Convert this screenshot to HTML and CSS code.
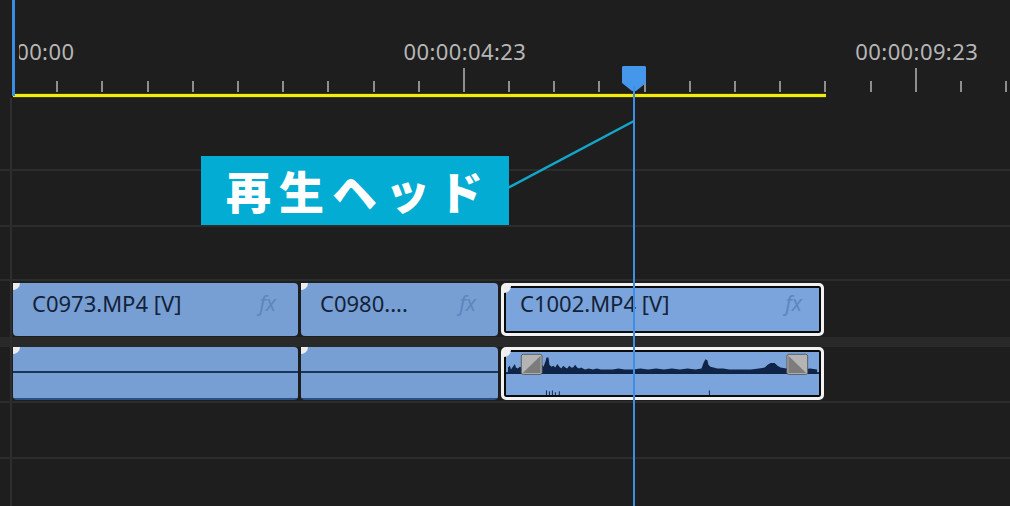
FILE: index.html
```html
<!DOCTYPE html>
<html lang="ja">
<head>
    <meta charset="UTF-8">
    <meta name="viewport" content="width=device-width, initial-scale=1.0">
    <title>タイムライン</title>
    <link rel="stylesheet" href="styles.css">
</head>
<body>
    <div class="timeline">
        <div class="ruler">
            <div class="scale-wrap">
                <div class="scale">
                    <div class="tick major"><span class="time">00:00:00:00</span></div>
                    <div class="tick"></div>
                    <div class="tick"></div>
                    <div class="tick"></div>
                    <div class="tick"></div>
                    <div class="tick"></div>
                    <div class="tick"></div>
                    <div class="tick"></div>
                    <div class="tick"></div>
                    <div class="tick"></div>
                    <div class="tick major"><span class="time">00:00:04:23</span></div>
                    <div class="tick"></div>
                    <div class="tick"></div>
                    <div class="tick"></div>
                    <div class="tick"></div>
                    <div class="tick"></div>
                    <div class="tick"></div>
                    <div class="tick"></div>
                    <div class="tick"></div>
                    <div class="tick"></div>
                    <div class="tick major"><span class="time">00:00:09:23</span></div>
                    <div class="tick"></div>
                    <div class="tick"></div>
                </div>
            </div>
            <div class="workarea"></div>
        </div>

        <div class="tracks">
            <div class="track t-first"><div class="gutter"></div><div class="lane"></div></div>
            <div class="track"><div class="gutter"></div><div class="lane"></div></div>
            <div class="track t-short"><div class="gutter"></div><div class="lane"></div></div>

            <div class="track video">
                <div class="gutter"></div>
                <div class="lane">
                    <div class="clip" style="width:285px"><span class="name">C0973.MP4 [V]</span><span class="fx">fx</span></div>
                    <div class="clip" style="width:197px"><span class="name">C0980....</span><span class="fx">fx</span></div>
                    <div class="clip selected" style="width:323px"><span class="name">C1002.MP4 [V]</span><span class="fx">fx</span></div>
                </div>
            </div>
            <div class="band"><div class="gutter"></div></div>
            <div class="track audio">
                <div class="gutter"></div>
                <div class="lane">
                    <div class="clip" style="width:285px"></div>
                    <div class="clip" style="width:197px"></div>
                    <div class="clip selected" style="width:323px">
                        <svg class="wave" viewBox="0 0 317 47" preserveAspectRatio="none">
                            <path fill="#0f2447" d="M2,24 L2,17 L4,15 L5,19 L7,16 L9,13 L10,17 L12,18 L14,16 L16,17 L18,14 L20,16 L22,15 L24,12 L26,16 L28,15 L30,17 L32,14 L34,16 L36,13 L38,16 L40,10 L41,6 L43,6 L44,14 L46,16 L48,15 L50,17 L52,13 L54,16 L56,18 L58,15 L60,17 L62,18 L64,15 L66,17 L68,17 L70,14 L72,17 L74,18 L76,17 L78,18 L80,19 L84,18 L88,19 L92,18 L96,19 L102,19 L108,19 L114,18 L120,19 L128,19 L136,18 L144,19 L152,18 L160,19 L168,18 L176,19 L184,18 L192,19 L198,18 L200,12 L202,8 L204,9 L205,14 L207,16 L210,17 L214,18 L220,18 L226,19 L232,19 L240,19 L248,19 L256,18 L262,17 L265,14 L268,12 L272,12 L275,15 L278,17 L284,18 L292,18 L300,19 L308,18 L315,19 L315,24 Z"/>
                            <rect x="0" y="22" width="317" height="2" fill="#0f2447"/>
                            <path stroke="#0f2447" stroke-width="1" d="M41,42 V47 M44,43 V47 M47,42 V47 M50,44 V47 M54,43 V47 M206,42 V47"/>
                            <rect x="15.5" y="2.5" width="21" height="22" rx="2" fill="#b4b4b4" stroke="#5a5a5a"/>
                            <polygon points="35,4 35,23 17,23" fill="#7c7c7c"/>
                            <rect x="284.5" y="2.5" width="21" height="22" rx="2" fill="#b4b4b4" stroke="#5a5a5a"/>
                            <polygon points="286,4 286,23 304,23" fill="#7c7c7c"/>
                        </svg>
                    </div>
                </div>
            </div>
            <div class="track"><div class="gutter"></div><div class="lane"></div></div>
            <div class="track t-last"><div class="gutter"></div><div class="lane"></div></div>
        </div>

        <!-- overlays -->
        <div class="inpoint"></div>
        <svg class="connector" width="1010" height="506">
            <line x1="508" y1="188" x2="634" y2="121" stroke="#12a6cb" stroke-width="2.5"/>
        </svg>
        <div class="callout">再生ヘッド</div>
        <div class="playhead">
            <svg class="head" width="24" height="26" viewBox="0 0 24 26">
                <polygon points="0,1 1,0 23,0 24,1 24,17 14,25 10,25 0,17" fill="#4597ec"/>
            </svg>
            <div class="playline"></div>
        </div>
    </div>
</body>
</html>
```

FILE: styles.css
```css
* {
    margin: 0;
    padding: 0;
    box-sizing: border-box;
}
body {
    background: #1e1e1e;
    font-family: "Noto Sans", "Liberation Sans", sans-serif;
    overflow: hidden;
}
.timeline {
    position: relative;
    width: 1010px;
    height: 506px;
    overflow: hidden;
}

/* ruler */
.ruler {
    height: 98px;
    display: flex;
    flex-direction: column;
}
.scale-wrap {
    height: 93px;
    margin-left: 19px;
    overflow: hidden;
}
.scale {
    display: flex;
    align-items: flex-end;
    height: 100%;
    margin-left: -8px;
    padding-bottom: 1px;
}
.tick {
    flex: none;
    width: 45.2px;
    height: 11px;
    border-left: 2px solid #8e8e8e;
    position: relative;
}
.tick.major {
    height: 24px;
}
.time {
    position: absolute;
    left: 0;
    bottom: 30px;
    transform: translateX(-50%);
    font-size: 22px;
    line-height: 22px;
    letter-spacing: 0.4px;
    color: #b6b6b6;
    white-space: nowrap;
}
.workarea {
    margin-left: 13px;
    width: 813px;
    height: 5px;
    background: #f3ea12;
    border-top: 1px solid #3a3606;
    border-bottom: 1px solid #3a3606;
}

/* tracks */
.track {
    display: flex;
    height: 56px;
    border-bottom: 2px solid #2c2c2c;
}
.t-first {
    height: 73px;
}
.t-short {
    height: 54px;
}
.track.video {
    height: 56px;
    border-bottom: none;
}
.track.t-last {
    height: 60px;
    border-bottom: none;
}
.band {
    height: 10px;
    background: #292929;
    display: flex;
}
.gutter {
    width: 12px;
    flex: none;
    border-right: 2px solid #2e2e2e;
}
.lane {
    flex: 1;
    display: flex;
    gap: 3px;
    padding-left: 1px;
}
.video .lane {
    padding-top: 2px;
}

/* clips */
.clip {
    position: relative;
    height: 53px;
    flex: none;
    background: #779fd4;
    border-radius: 4px;
    display: flex;
    justify-content: space-between;
    align-items: flex-start;
    padding: 8px 22px 0 19px;
}
.clip::before {
    content: "";
    position: absolute;
    top: 0;
    left: 0;
    width: 7px;
    height: 7px;
    background: #ededed;
    border-bottom-right-radius: 7px;
}
.clip.selected {
    background: #7aa4db;
    border: 3px solid #f2f2f2;
    box-shadow: inset 0 0 0 2px #0b0b0b;
    border-radius: 5px;
    padding: 5px 19px 0 16px;
}
.name {
    font-size: 22px;
    line-height: 24px;
    color: #142238;
    white-space: nowrap;
}
.fx {
    font-size: 21px;
    line-height: 24px;
    font-style: italic;
    color: #5e86bd;
}
.audio .clip {
    padding: 0;
    background:
        linear-gradient(to bottom, transparent 24px, #18375f 24px, #18375f 26px, transparent 26px),
        linear-gradient(to top, #2a4f80 2px, transparent 2px),
        #779fd4;
}
.audio .clip.selected {
    padding: 2px;
    background: #7aa4db;
}
.wave {
    display: block;
    width: 100%;
    height: 100%;
}

/* overlays */
.inpoint {
    position: absolute;
    left: 12px;
    top: 0;
    width: 3px;
    height: 96px;
    background: #3a8de2;
}
.connector {
    position: absolute;
    left: 0;
    top: 0;
}
.callout {
    position: absolute;
    left: 201px;
    top: 156px;
    width: 308px;
    height: 69px;
    background: #02acd2;
    color: #ffffff;
    font-family: "Noto Sans CJK JP", sans-serif;
    font-weight: 900;
    font-size: 45px;
    line-height: 69px;
    letter-spacing: 8px;
    padding-left: 25px;
    white-space: nowrap;
}
.playhead {
    position: absolute;
    left: 622px;
    top: 66px;
    width: 24px;
    height: 440px;
}
.head {
    display: block;
}
.playline {
    position: absolute;
    left: 11px;
    top: 20px;
    width: 2px;
    bottom: 0;
    background: #3d8fe6;
}
```
